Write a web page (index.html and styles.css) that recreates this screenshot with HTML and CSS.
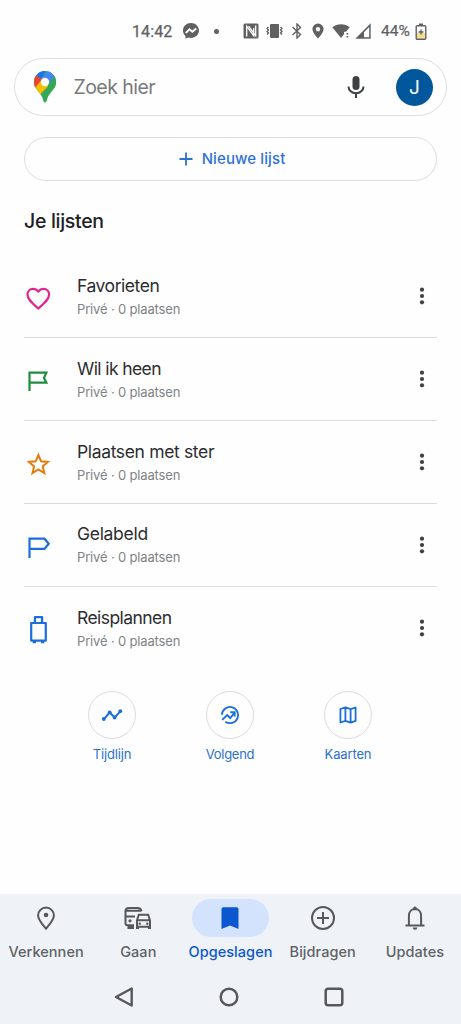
FILE: index.html
```html
<!DOCTYPE html>
<html lang="nl">
<head>
<meta charset="utf-8">
<meta name="viewport" content="width=device-width, initial-scale=1">
<title>Opgeslagen</title>
<link rel="stylesheet" href="styles.css">
</head>
<body>
<div class="screen">
  <header class="status">
    <span class="time">14:42</span>
    <svg class="s-msg" width="18" height="18" viewBox="0 0 18 18"><path fill="#5f6062" d="M9 1C4.400 1 1 4.300 1 8.600c0 2.300 1 4.200 2.500 5.500v2.700l2.600-1.300c.9.300 1.900.4 2.900.4 4.600 0 8-3.200 8-7.300S13.600 1 9 1z"/><path fill="none" stroke="#fff" stroke-width="1.900" d="M3.800 11 7.500 7.200l2.800 2.500 4-3.200"/></svg>
    <span class="s-dot"></span>
    <svg class="s-nfc" width="16" height="16" viewBox="0 0 16 16"><rect x=".5" y=".5" width="15" height="15" rx="1.500" fill="#5f6062"/><path fill="none" stroke="#fff" stroke-width="1.300" d="M3.700 13.500V3.200l7 9.600V5M12.700 2.500v10.300L5.600 3.200"/></svg>
    <svg class="s-vib" width="17" height="16" viewBox="0 0 17 16"><rect x="4" y="1" width="9" height="14" rx="1" fill="#5f6062"/><path fill="none" stroke="#5f6062" stroke-width="1.300" d="M2.500 4 1 5.500 2.500 7 1 8.500 2.500 10 1 11.500M14.500 4 16 5.500 14.500 7 16 8.500 14.500 10 16 11.500"/></svg>
    <svg class="s-bt" width="12" height="16" viewBox="0 0 12 16"><path fill="none" stroke="#5f6062" stroke-width="1.400" d="M1.500 4 9.500 11.500 6 15V1l3.500 3.500L1.500 12"/></svg>
    <svg class="s-pin" width="12" height="16" viewBox="0 0 12 16"><path fill="#5f6062" fill-rule="evenodd" d="M6 .5A5.600 5.600 0 0 0 .4 6.100C.4 10 6 15.500 6 15.500S11.600 10 11.600 6.100A5.600 5.600 0 0 0 6 .5zM6 4a2.200 2.200 0 1 1 0 4.400A2.200 2.200 0 0 1 6 4z"/></svg>
    <svg class="s-wifi" width="18" height="16" viewBox="0 0 18 16"><path fill="#5f6062" d="M.3 4.200C5 .3 13 .3 17.700 4.200L14 8.800h-2v2.400L9 15z"/><path fill="#5f6062" d="M14.500 10h1.700v1.500h-1.700zM14.500 13h1.700v1.500h-1.700z"/></svg>
    <svg class="s-cell" width="16" height="16" viewBox="0 0 16 16"><path fill="#5f6062" fill-rule="evenodd" d="M15.700.3v15.400H.3zM14.200 3.900 9 9.200v5h5.200z"/></svg>
    <span class="pct">44%</span>
    <svg class="s-bat" width="12" height="17" viewBox="0 0 12 17"><path fill="#f6dc8e" d="M1.500 10h9v5.500h-9z"/><path fill="#5f6062" d="M4 .5h4V3H4z"/><rect x="1.200" y="2.700" width="9.600" height="13.500" rx="1" fill="none" stroke="#5f6062" stroke-width="1.400"/><path stroke="#5f6062" stroke-width="1.400" d="M6 6.500v5M3.500 9h5"/></svg>
  </header>

  <div class="search">
    <svg class="logo" width="24" height="34" viewBox="0 0 24 34">
      <defs><clipPath id="pin"><path d="M12 1A11 11 0 0 0 1 12c0 3 .9 5 2.500 7.200 2 2.800 4.500 5 5.700 8 .8 1.800 1 3.300 1.400 4.300.5 1.200 2.300 1.200 2.800 0 .4-1 .6-2.500 1.400-4.300 1.200-3 3.700-5.200 5.700-8C22.100 17 23 15 23 12A11 11 0 0 0 12 1z"/></clipPath></defs>
      <g clip-path="url(#pin)">
        <path fill="#34a853" d="M0 0h24v34H0z"/>
        <path fill="#fbbc04" d="M0 21.500 0 16 8.500 8l8.300 6.500L5.600 26z"/>
        <path fill="#ea4335" d="M0 2.500 3.500 4.700 9 9.200 1.600 18.200 0 18z"/>
        <path fill="#1a73e8" d="M3.300 4.900 7 0h6L8.300 9.100z"/>
        <path fill="#4285f4" d="M15.700 0H24v7L15 16l-6.700-7L14 1z"/>
        <path fill="#34a853" d="M21.500 6H25v12l-9 0-1-3.200z"/>
      </g>
      <circle cx="12" cy="12" r="4.200" fill="#fff"/>
    </svg>
    <span class="placeholder">Zoek hier</span>
    <svg class="mic" width="18" height="24" viewBox="0 0 18 24"><rect x="5.500" y="1" width="7" height="14" rx="3.500" fill="#3f4043"/><path fill="none" stroke="#3f4043" stroke-width="2" d="M1.500 11.500a7.500 6.800 0 0 0 15 0M9 18.500V23"/></svg>
    <span class="avatar">J</span>
  </div>

  <button class="new-list">
    <svg width="14" height="14" viewBox="0 0 14 14"><path stroke="#2d72d9" stroke-width="1.800" d="M7 .5v13M.5 7h13"/></svg>
    <span>Nieuwe lijst</span>
  </button>

  <h1 class="heading"><span>Je lijsten</span></h1>

  <ul class="lists">
    <li class="row">
      <svg class="icon" width="28" height="28" viewBox="0 0 28 28"><path fill="none" stroke="#e0278f" stroke-width="2.200" stroke-linejoin="round" d="M14.300 24.500C8.800 19.600 3.500 15.600 3.500 10.500c0-3.200 2.400-5.600 5.500-5.600 2.100 0 4 1 5.300 2.700 1.300-1.700 3.200-2.700 5.300-2.700 3.100 0 5.500 2.400 5.500 5.600 0 5.100-5.300 9.100-10.800 14z"/></svg>
      <div class="text"><span class="name n1">Favorieten</span><span class="sub">Privé · 0 plaatsen</span></div>
      <svg class="more" width="6" height="18" viewBox="0 0 6 18"><g fill="#3f4043"><circle cx="3" cy="2.700" r="2.100"/><circle cx="3" cy="9" r="2.100"/><circle cx="3" cy="15.300" r="2.100"/></g></svg>
    </li>
    <li class="row">
      <svg class="icon" width="28" height="28" viewBox="0 0 28 28"><path fill="none" stroke="#1e8e3e" stroke-width="2.200" d="M5.500 24.100V5.700h16.900l-2.400 5 2.400 5H5.500"/></svg>
      <div class="text"><span class="name n2">Wil ik heen</span><span class="sub">Privé · 0 plaatsen</span></div>
      <svg class="more" width="6" height="18" viewBox="0 0 6 18"><g fill="#3f4043"><circle cx="3" cy="2.700" r="2.100"/><circle cx="3" cy="9" r="2.100"/><circle cx="3" cy="15.300" r="2.100"/></g></svg>
    </li>
    <li class="row">
      <svg class="icon" width="28" height="28" viewBox="0 0 28 28"><path fill="none" stroke="#e37d0c" stroke-width="2" d="m14.400 5 2.700 6.300 6.800.6-5.200 4.500 1.600 6.700-5.900-3.600-5.900 3.600 1.600-6.700-5.200-4.500 6.800-.6z"/></svg>
      <div class="text"><span class="name n3">Plaatsen met ster</span><span class="sub">Privé · 0 plaatsen</span></div>
      <svg class="more" width="6" height="18" viewBox="0 0 6 18"><g fill="#3f4043"><circle cx="3" cy="2.700" r="2.100"/><circle cx="3" cy="9" r="2.100"/><circle cx="3" cy="15.300" r="2.100"/></g></svg>
    </li>
    <li class="row">
      <svg class="icon" width="28" height="28" viewBox="0 0 28 28"><path fill="none" stroke="#1b6fdc" stroke-width="2.200" d="M5.500 25V5.700h15l4.200 5.100-4.200 5.100h-15"/></svg>
      <div class="text"><span class="name n4">Gelabeld</span><span class="sub">Privé · 0 plaatsen</span></div>
      <svg class="more" width="6" height="18" viewBox="0 0 6 18"><g fill="#3f4043"><circle cx="3" cy="2.700" r="2.100"/><circle cx="3" cy="9" r="2.100"/><circle cx="3" cy="15.300" r="2.100"/></g></svg>
    </li>
    <li class="row">
      <svg class="icon" width="28" height="28" viewBox="0 0 28 28"><path fill="none" stroke="#1b6fdc" stroke-width="2.200" stroke-linejoin="round" d="M7.200 7h14.600v17.600H7.200zM10.900 7V1.200h7.200V7"/><path fill="#1b6fdc" d="M8.700 24.500H12v2.700H8.700zM17 24.500h3.300v2.700H17z"/></svg>
      <div class="text"><span class="name n5">Reisplannen</span><span class="sub">Privé · 0 plaatsen</span></div>
      <svg class="more" width="6" height="18" viewBox="0 0 6 18"><g fill="#3f4043"><circle cx="3" cy="2.700" r="2.100"/><circle cx="3" cy="9" r="2.100"/><circle cx="3" cy="15.300" r="2.100"/></g></svg>
    </li>
  </ul>

  <div class="shortcuts">
    <div class="shortcut">
      <span class="ring"><svg width="22" height="22" viewBox="0 0 22 22"><path fill="none" stroke="#1b6fdc" stroke-width="1.900" d="M3 15 8.700 8.500l5 5L19.300 7.300"/><g fill="#1b6fdc"><circle cx="2.800" cy="15" r="1.900"/><circle cx="8.700" cy="8.300" r="1.900"/><circle cx="13.600" cy="13.500" r="1.900"/><circle cx="19.300" cy="7.200" r="1.900"/></g></svg></span>
      <span class="label l1">Tijdlijn</span>
    </div>
    <div class="shortcut">
      <span class="ring"><svg width="22" height="22" viewBox="0 0 22 22"><g fill="none" stroke="#1b6fdc" stroke-width="1.900"><path d="M2.900 10.800A8.100 8.100 0 1 1 6.400 17.700"/><path d="m3.200 15.900 5-4.800 3 2.900 4.500-5.300"/></g><path fill="#1b6fdc" d="M11.300 7.300h5.300v5.300h-1.900V9.200h-3.400z"/></svg></span>
      <span class="label l2">Volgend</span>
    </div>
    <div class="shortcut">
      <span class="ring"><svg width="22" height="22" viewBox="0 0 22 22"><path fill="none" stroke="#1b6fdc" stroke-width="1.800" stroke-linejoin="round" d="m3.400 5 5-1.600 5.200 1.700 5-1.600v13.400l-5 1.700-5.200-1.700-5 1.600zM8.400 3.400v13.500M13.600 5.100v13.500"/></svg></span>
      <span class="label l3">Kaarten</span>
    </div>
  </div>

  <footer class="bottom">
    <nav class="tabs">
      <a class="tab"><span class="pill"><svg width="28" height="28" viewBox="0 0 28 28"><path fill="none" stroke="#56585b" stroke-width="2" d="M14 24.700c-3.200-4-7.900-8.700-7.900-13.200a7.900 7.900 0 0 1 15.800 0c0 4.500-4.700 9.200-7.900 13.200z"/><circle cx="14" cy="11" r="2.300" fill="#56585b"/></svg></span><span class="cap c1">Verkennen</span></a>
      <a class="tab"><span class="pill"><svg width="28" height="28" viewBox="0 0 28 28"><g fill="none" stroke="#56585b" stroke-width="2"><path d="M10 21.200H3.500a2 2 0 0 1-2-2V6.800c0-2.300 1.500-2.900 3.500-2.900h8.500c2.600 0 3.700.7 3.900 3.300M1.500 6.700h16M1.500 12.500H11"/><path d="M13 16.300 14.800 10.700h9.400l1.800 5.600v6.500H13zM13 16.300h13"/></g><g fill="#56585b"><path d="M3.500 21.500H10V25H3.500zM12 22h3v3h-3zM24 22h3v3h-3z"/><circle cx="6" cy="16.800" r="1.600"/><circle cx="15.700" cy="19.700" r="1.200"/><circle cx="23.300" cy="19.700" r="1.200"/></g></svg></span><span class="cap c2">Gaan</span></a>
      <a class="tab active"><span class="pill"><svg width="28" height="28" viewBox="0 0 28 28"><path fill="#0b57d0" d="M7.500 3.300h13c1.300 0 2 .8 2 2V25L14 21.500 5.500 25V5.300c0-1.200.8-2 2-2z"/></svg></span><span class="cap c3">Opgeslagen</span></a>
      <a class="tab"><span class="pill"><svg width="28" height="28" viewBox="0 0 28 28"><g fill="none" stroke="#56585b" stroke-width="2"><circle cx="14" cy="14" r="11"/><path d="M14 8v12M8 14h12"/></g></svg></span><span class="cap c4">Bijdragen</span></a>
      <a class="tab"><span class="pill"><svg width="28" height="28" viewBox="0 0 28 28"><path fill="none" stroke="#56585b" stroke-width="2" d="M7.900 21.300V11.900c0-4 2.600-6.800 6.100-6.800s6.100 2.800 6.100 6.800v9.400M4.500 21.500h19"/><path fill="#56585b" d="M12.200 4.200a1.800 1.800 0 0 1 3.600 0v2h-3.600zM11.700 23.500h4.600a2.300 2.300 0 0 1-4.600 0z"/></svg></span><span class="cap c5">Updates</span></a>
    </nav>
    <div class="system">
      <svg width="22" height="22" viewBox="0 0 22 22"><path fill="none" stroke="#56585b" stroke-width="2.400" stroke-linejoin="round" d="M18.700 2.500v17L3 11z"/></svg>
      <svg width="22" height="22" viewBox="0 0 22 22"><circle cx="11" cy="11" r="8.300" fill="none" stroke="#56585b" stroke-width="2.500"/></svg>
      <svg width="22" height="22" viewBox="0 0 22 22"><rect x="2.700" y="2.700" width="16.600" height="16.600" rx="2.500" fill="none" stroke="#56585b" stroke-width="2.500"/></svg>
    </div>
  </footer>
</div>
</body>
</html>
```
FILE: styles.css
```css
* { box-sizing: border-box; }
body { margin: 0; background: #fff; font-family: Inter, "Open Sans", sans-serif; }
.screen { width: 461px; height: 1024px; display: flex; flex-direction: column; background: #fefefe; overflow: hidden; }
svg { display: block; flex: none; }
span { white-space: nowrap; }

.status { height: 58px; padding: 4px 33px 0 132px; display: flex; align-items: center; color: #5f6062; font: 400 16px Roboto, sans-serif; }
.time { width: 50px; letter-spacing: .1px; -webkit-text-stroke: .25px #5f6062; }
.s-dot { width: 5px; height: 5px; border-radius: 50%; background: #5f6062; margin: 0 24px 0 14px; }
.s-nfc { margin-left: 0; }
.s-vib { margin-left: 7px; }
.s-bt { margin-left: 8px; }
.s-pin { margin-left: 9px; }
.s-wifi { margin-left: 8px; }
.s-cell { margin-left: 5px; }
.pct { width: 34px; margin-left: 10px; font-size: 15.5px; -webkit-text-stroke: .2px #5f6062; }

.search { height: 58px; margin: 0 14px; padding: 0 13px 0 18px; border: 1px solid #dedede; border-radius: 29px; display: flex; align-items: center; }
.placeholder { margin-left: 16.5px; flex: 1; font-size: 19.5px; letter-spacing: -.55px; color: #77797c; }
.mic { margin-right: 31px; }
.avatar { width: 37px; height: 37px; border-radius: 50%; background: #01579b; color: #fff; font-size: 19px; display: grid; place-items: center; }

.new-list { height: 44px; margin: 21px 24px 0; padding: 0 0 2px 3px; border: 1px solid #dedede; border-radius: 22px; background: none; display: flex; align-items: center; justify-content: center; gap: 9px; color: #2d72d9; font: 500 15px Inter, sans-serif; letter-spacing: .1px; }
.new-list svg { margin-top: 1px; }

.heading { height: 74.4px; margin: 0 24px; padding-top: 28px; font-size: 19.5px; line-height: 24px; font-weight: 500; letter-spacing: -.3px; color: #202124; }

.lists { margin: 0; padding: 0 24px; list-style: none; }
.row { height: 82.8px; display: flex; align-items: center; border-bottom: 1px solid #dcdcdc; }
.row:last-child { border-bottom: 0; }
.icon { margin-top: 4px; }
.text { flex: 1; margin-left: 25px; padding-top: 2.6px; display: flex; flex-direction: column; }
.name { font-size: 17.5px; line-height: 24px; letter-spacing: -.45px; color: #2c2d30; }
.n2 { letter-spacing: -.6px; }
.n3 { letter-spacing: -.35px; }
.n4 { letter-spacing: -.3px; }
.n5 { letter-spacing: -.57px; }
.sub { font-size: 13px; line-height: 23px; letter-spacing: -.16px; color: #808386; }
.more { margin: 0 12px 0 0; }

.shortcuts { display: flex; justify-content: center; gap: 70px; margin: 21.6px 1px 0 0; }
.shortcut { width: 48px; display: flex; flex-direction: column; align-items: center; }
.ring { width: 48px; height: 48px; border: 1px solid #dcdce2; border-radius: 50%; display: grid; place-items: center; }
.label { margin-top: 6px; font-size: 13px; line-height: 18px; letter-spacing: -.15px; color: #2d72c9; }
.l2 { letter-spacing: -.3px; }

.bottom { margin-top: auto; height: 130px; background: #eff2f7; }
.tabs { display: grid; grid-template-columns: repeat(5, 1fr); padding-top: 5px; }
.tab { display: flex; flex-direction: column; align-items: center; color: #606266; }
.pill { width: 77px; height: 38px; border-radius: 19px; display: grid; place-items: center; }
.cap { margin-top: 5px; font-size: 14.5px; line-height: 20px; font-weight: 500; letter-spacing: .05px; }
.active { color: #0b57d0; }
.active .pill { background: #d3e3fd; }
.system { display: flex; justify-content: center; gap: 83px; margin: 24px 3px 0 0; }
```
